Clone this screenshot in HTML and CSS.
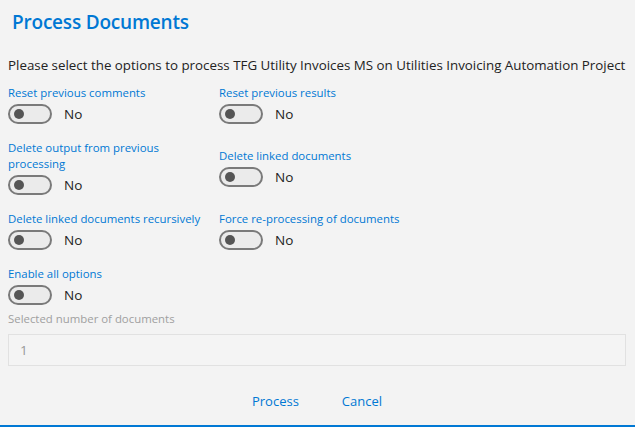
FILE: index.html
```html
<!DOCTYPE html>
<html lang="en">
<head>
<meta charset="utf-8">
<title>Process Documents</title>
<link rel="stylesheet" href="styles.css">
</head>
<body>
<div class="dialog">
  <h1 class="title">Process Documents</h1>
  <p class="intro">Please select the options to process TFG Utility Invoices MS on Utilities Invoicing Automation Project</p>
  <div class="options">
    <div class="opt">
      <div class="opt-label">Reset previous comments</div>
      <div class="toggle-row"><span class="toggle"><span class="thumb"></span></span><span class="state">No</span></div>
    </div>
    <div class="opt">
      <div class="opt-label">Reset previous results</div>
      <div class="toggle-row"><span class="toggle"><span class="thumb"></span></span><span class="state">No</span></div>
    </div>
    <div class="opt">
      <div class="opt-label">Delete output from previous processing</div>
      <div class="toggle-row"><span class="toggle"><span class="thumb"></span></span><span class="state">No</span></div>
    </div>
    <div class="opt">
      <div class="opt-label">Delete linked documents</div>
      <div class="toggle-row"><span class="toggle"><span class="thumb"></span></span><span class="state">No</span></div>
    </div>
    <div class="opt">
      <div class="opt-label">Delete linked documents recursively</div>
      <div class="toggle-row"><span class="toggle"><span class="thumb"></span></span><span class="state">No</span></div>
    </div>
    <div class="opt">
      <div class="opt-label">Force re-processing of documents</div>
      <div class="toggle-row"><span class="toggle"><span class="thumb"></span></span><span class="state">No</span></div>
    </div>
    <div class="opt">
      <div class="opt-label">Enable all options</div>
      <div class="toggle-row"><span class="toggle"><span class="thumb"></span></span><span class="state">No</span></div>
    </div>
  </div>
  <div class="field">
    <div class="field-label">Selected number of documents</div>
    <div class="field-input">1</div>
  </div>
  <div class="actions">
    <span class="btn">Process</span>
    <span class="btn">Cancel</span>
  </div>
</div>
</body>
</html>
```
FILE: styles.css
```css
html, body {
  margin: 0;
  padding: 0;
  background: #f3f3f3;
}
body {
  font-family: "Open Sans", "Noto Sans", sans-serif;
  color: #222;
  width: 635px;
  height: 427px;
  overflow: hidden;
}
.dialog {
  box-sizing: border-box;
  height: 427px;
  padding: 8px 9px 0 8px;
  border-bottom: 2px solid #0078d4;
}
.title {
  margin: 0 0 0 4px;
  font-size: 19px;
  font-weight: 600;
  line-height: 28px;
  color: #0078d4;
  letter-spacing: -0.2px;
}
.intro {
  margin: 19px 0 10px 0;
  font-size: 13.35px;
  line-height: 20px;
  white-space: nowrap;
}
.options {
  display: grid;
  grid-template-columns: 211px 1fr;
  align-items: center;
}
.opt {
  padding-bottom: 16px;
}
.opt-label {
  font-size: 11.4px;
  line-height: 16px;
  color: #0078d4;
  width: 196px;
}
.toggle-row {
  display: flex;
  align-items: center;
  margin-top: 3px;
  height: 20px;
}
.toggle {
  box-sizing: border-box;
  width: 44px;
  height: 20px;
  border: 2px solid #7a7a7a;
  border-radius: 10px;
  background: #ebebeb;
  display: flex;
  align-items: center;
  padding-left: 4px;
}
.thumb {
  width: 10px;
  height: 10px;
  border-radius: 50%;
  background: #555;
}
.state {
  margin-left: 12px;
  font-size: 13.5px;
  color: #222;
}
.field {
  margin-top: -10px;
}
.field-label {
  font-size: 11.4px;
  line-height: 16px;
  color: #a0a0a0;
}
.field-input {
  box-sizing: border-box;
  margin-top: 7px;
  height: 32px;
  border: 1px solid #e1e1e1;
  background: #f4f4f4;
  color: #999;
  font-size: 13.5px;
  line-height: 30px;
  padding-left: 11px;
}
.actions {
  display: flex;
  justify-content: center;
  gap: 43px;
  margin-top: 25px;
}
.btn {
  font-size: 13px;
  line-height: 20px;
  color: #0078d4;
}
```
